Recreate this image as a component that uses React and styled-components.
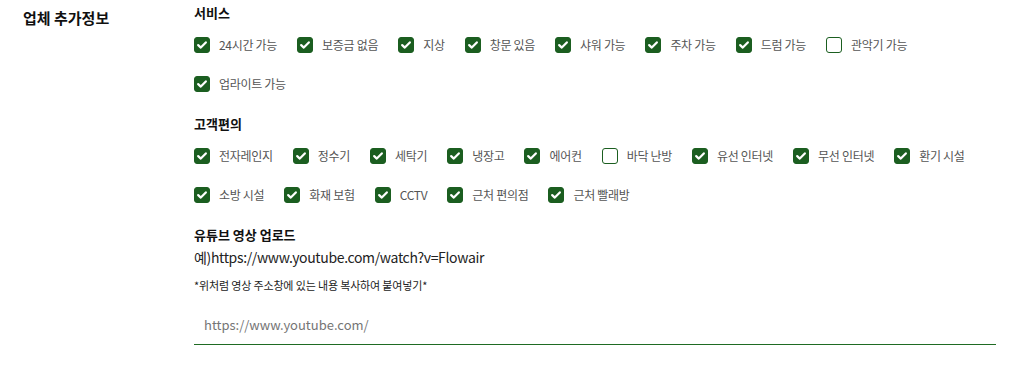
import React from 'react';
import styled, { createGlobalStyle } from 'styled-components';

const GlobalStyle = createGlobalStyle`
  body{
    margin: 0;
    background: #fff;
    font-family: "Noto Sans CJK KR", "Noto Sans", sans-serif;
  }
`

const Page = styled.section`
  display: grid;
  grid-template-columns: 194px 802px;
  padding-top: 2px;
  color: #222;
`

const SideTitle = styled.h2`
  margin: 0;
  padding: 6px 0 0 23px;
  font-size: 15px;
  line-height: 20px;
  font-weight: bold;
  color: #111;
`

const Group = styled.div`
  margin-bottom: 10px;
`

const GroupTitle = styled.h3`
  margin: 0;
  font-size: 13px;
  line-height: 22px;
  font-weight: bold;
  color: #111;
`

const OptionList = styled.ul`
  display: flex;
  flex-wrap: wrap;
  list-style-type: none;
  margin: 1px 0 0;
  padding: 0;
`

const Option = styled.li`
  display: flex;
  align-items: center;
  height: 39px;
  margin-right: 20px;
  font-size: 12px;
  letter-spacing: -0.3px;
  color: #555;
`

const Box = styled.span`
  display: flex;
  justify-content: center;
  align-items: center;
  box-sizing: border-box;
  width: 16px;
  height: 16px;
  margin-right: 9px;
  border-radius: 3px;
  border: 1.2px solid #1b5e20;
  background: ${props => props.$checked ? '#1b5e20' : '#fff'};
`

const Example = styled.p`
  margin: 0;
  font-size: 14px;
  line-height: 22px;
  letter-spacing: -0.35px;
  color: #222;
`

const Note = styled.p`
  margin: 7px 0 0;
  font-size: 11px;
  line-height: 20px;
  letter-spacing: -0.15px;
  color: #222;
`

const UrlInput = styled.input`
  display: block;
  box-sizing: border-box;
  width: 100%;
  height: 41px;
  margin-top: 9px;
  padding: 0 10px;
  border: none;
  border-bottom: 1px solid #1f6b23;
  outline: none;
  font-family: "Noto Sans CJK KR", "Noto Sans", sans-serif;
  font-size: 13px;
  color: #333;
  ::placeholder{
    color: #888;
  }
`

const services = [
  ['24시간 가능', true],
  ['보증금 없음', true],
  ['지상', true],
  ['창문 있음', true],
  ['샤워 가능', true],
  ['주차 가능', true],
  ['드럼 가능', true],
  ['관악기 가능', false],
  ['업라이트 가능', true],
]

const amenities = [
  ['전자레인지', true],
  ['정수기', true],
  ['세탁기', true],
  ['냉장고', true],
  ['에어컨', true],
  ['바닥 난방', false],
  ['유선 인터넷', true],
  ['무선 인터넷', true],
  ['환기 시설', true],
  ['소방 시설', true],
  ['화재 보험', true],
  ['CCTV', true],
  ['근처 편의점', true],
  ['근처 빨래방', true],
]

const Check = () => (
  <svg width="10" height="8" viewBox="0 0 10 8">
    <path d="M1.2 4.1 L3.8 6.6 L8.8 1.4" fill="none" stroke="#fff" strokeWidth="2.2" strokeLinecap="round" strokeLinejoin="round"/>
  </svg>
)

const Options = ({ items }) => (
  <OptionList>
    {items.map(([name, checked]) => (
      <Option key={name}>
        <Box $checked={checked}>{checked && <Check/>}</Box>
        {name}
      </Option>
    ))}
  </OptionList>
)

export default function App(){
  return(
    <>
      <GlobalStyle/>
      <Page>
        <SideTitle>업체 추가정보</SideTitle>
        <div>
          <Group>
            <GroupTitle>서비스</GroupTitle>
            <Options items={services}/>
          </Group>
          <Group>
            <GroupTitle>고객편의</GroupTitle>
            <Options items={amenities}/>
          </Group>
          <GroupTitle>유튜브 영상 업로드</GroupTitle>
          <Example>예)https://www.youtube.com/watch?v=Flowair</Example>
          <Note>*위처럼 영상 주소창에 있는 내용 복사하여 붙여넣기*</Note>
          <UrlInput type="text" placeholder="https://www.youtube.com/"/>
        </div>
      </Page>
    </>
  )
}
